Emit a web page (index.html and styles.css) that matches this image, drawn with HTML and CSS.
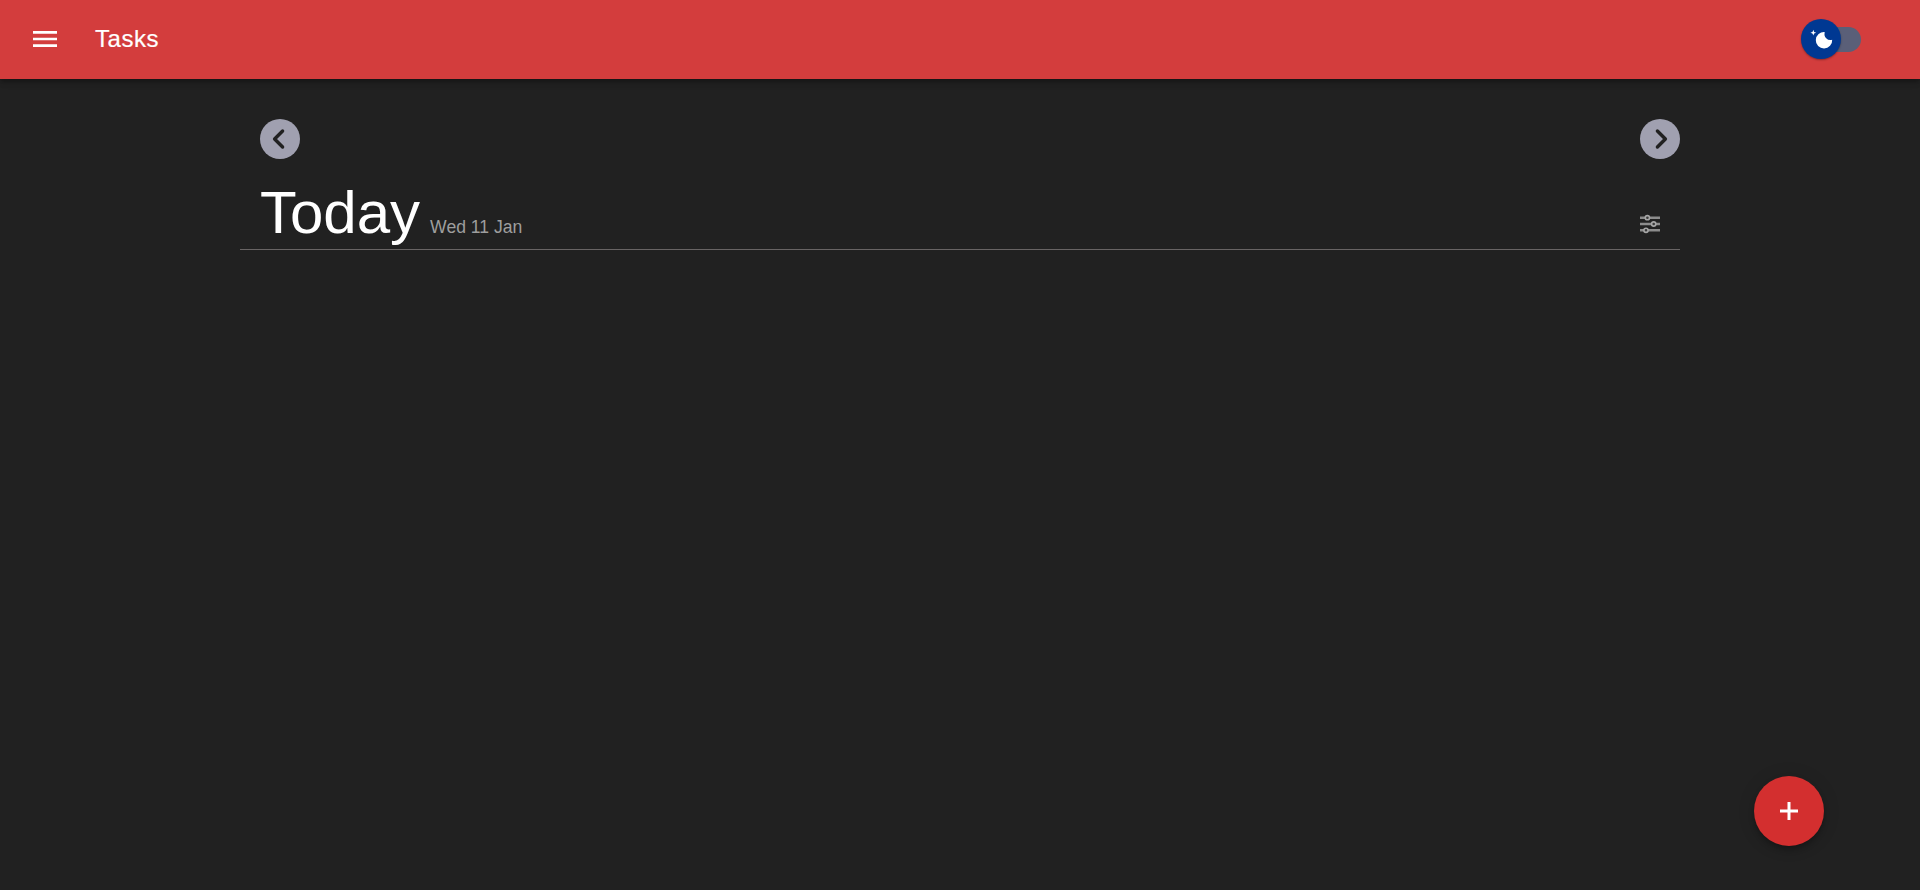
FILE: index.html
```html
<!DOCTYPE html>
<html lang="en">
<head>
<meta charset="utf-8">
<title>Tasks</title>
<link rel="stylesheet" href="styles.css">
</head>
<body>
<header class="appbar">
  <button class="menu-btn" aria-label="menu">
    <svg class="menu-icon" viewBox="0 0 24 24"><path d="M3 18h18v-2H3v2zm0-5h18v-2H3v2zm0-7v2h18V6H3z"/></svg>
  </button>
  <h1 class="app-title">Tasks</h1>
  <div class="theme-switch">
    <span class="switch-track"></span>
    <span class="switch-thumb">
      <svg class="moon-icon" viewBox="0 0 40 40">
        <path class="moon" d="M23.790 13.140A8.200 8.200 0 1 0 31.190 20.760A6 6 0 0 1 23.790 13.140Z"/>
        <path class="moon" d="M12.300 10.800l0.800 2.100l2.100 0.800l-2.100 0.800l-0.800 2.100l-0.800-2.100l-2.100-0.800l2.100-0.800z"/>
      </svg>
    </span>
  </div>
</header>
<main class="page">
  <div class="day-nav">
    <button class="nav-btn" aria-label="previous day">
      <svg class="chev" viewBox="0 0 40 40"><path d="M22.600 12L14.600 20L22.600 28"/></svg>
    </button>
    <button class="nav-btn" aria-label="next day">
      <svg class="chev" viewBox="0 0 40 40"><path d="M17.400 12L25.400 20L17.400 28"/></svg>
    </button>
  </div>
  <div class="day-head">
    <div class="day-title">
      <h2 class="today">Today</h2>
      <span class="date">Wed 11 Jan</span>
    </div>
    <svg class="filter-icon" viewBox="0 0 20 20">
      <path class="filter-lines" d="M0 3.700h20M0 10h20M0 16.300h20"/>
      <circle class="filter-knob" cx="7.400" cy="3.700" r="2.100"/>
      <circle class="filter-knob" cx="13.700" cy="10" r="2.100"/>
      <circle class="filter-knob" cx="6" cy="16.300" r="2.100"/>
    </svg>
  </div>
</main>
<button class="fab" aria-label="add task">
  <svg class="plus" viewBox="0 0 18 18"><path d="M7.500 0h3v7.500H18v3h-7.500V18h-3v-7.500H0v-3h7.500z"/></svg>
</button>
</body>
</html>
```
FILE: styles.css
```css
* { box-sizing: border-box; }
html, body { margin: 0; height: 100%; }
body {
  background: #212121;
  color: #fff;
  font-family: "Liberation Sans", Arial, sans-serif;
  overflow: hidden;
}
button { border: 0; padding: 0; background: none; cursor: pointer; }

.appbar {
  height: 79px;
  background: #d33d3d;
  display: flex;
  align-items: center;
  padding: 0 59px 1px 29px;
  box-shadow: 0 2px 4px -1px rgba(0,0,0,.2), 0 4px 5px 0 rgba(0,0,0,.14), 0 1px 10px 0 rgba(0,0,0,.12);
}
.menu-btn { width: 32px; height: 32px; display: block; }
.menu-icon { width: 32px; height: 32px; display: block; fill: #fff; }
.app-title {
  margin: 0 0 0 34px;
  font-size: 24px;
  font-weight: 400;
  line-height: 1;
  letter-spacing: .55px;
  -webkit-text-stroke: .2px #fff;
  flex: 1;
}
.theme-switch { position: relative; width: 60px; height: 40px; }
.switch-track {
  position: absolute;
  right: 0;
  top: 8px;
  width: 50px;
  height: 25px;
  border-radius: 13px;
  background: #5a5f78;
}
.switch-thumb {
  position: absolute;
  left: 0;
  top: 0;
  width: 40px;
  height: 40px;
  border-radius: 50%;
  background: #003892;
  box-shadow: 0 1px 2px rgba(0,0,0,.35);
}
.moon-icon { width: 40px; height: 40px; display: block; }
.moon { fill: #fff; }

.page { width: 1440px; margin: 0 auto; }
.day-nav {
  display: flex;
  justify-content: space-between;
  padding: 40px 0 0 20px;
}
.nav-btn {
  width: 40px;
  height: 40px;
  border-radius: 50%;
  background: #a0a0b0;
  display: block;
}
.chev { width: 40px; height: 40px; display: block; fill: none; stroke: #212121; stroke-width: 3.400; stroke-linecap: round; stroke-linejoin: round; }
.day-head {
  display: flex;
  justify-content: space-between;
  align-items: flex-end;
  padding: 0 20px 1px;
  border-bottom: 1px solid #686464;
  height: 91px;
}
.day-title { display: flex; align-items: baseline; gap: 10px; }
.today { margin: 0; font-size: 60px; font-weight: 400; line-height: 70px; }
.date { font-size: 17.600px; color: #9e9e9e; }
.filter-icon { width: 20px; height: 20px; margin-bottom: 14px; display: block; }
.filter-lines { fill: none; stroke: #8c8c8c; stroke-width: 2.400; }
.filter-knob { fill: #3a3a3a; stroke: #a6a6a6; stroke-width: 1.600; }

.fab {
  position: fixed;
  right: 96px;
  bottom: 44px;
  width: 70px;
  height: 70px;
  border-radius: 50%;
  background: #d32f2f;
  display: flex;
  align-items: center;
  justify-content: center;
  box-shadow: 0 3px 5px -1px rgba(0,0,0,.2), 0 6px 10px 0 rgba(0,0,0,.14), 0 1px 18px 0 rgba(0,0,0,.12);
}
.plus { width: 18px; height: 18px; fill: #fff; display: block; }
```
